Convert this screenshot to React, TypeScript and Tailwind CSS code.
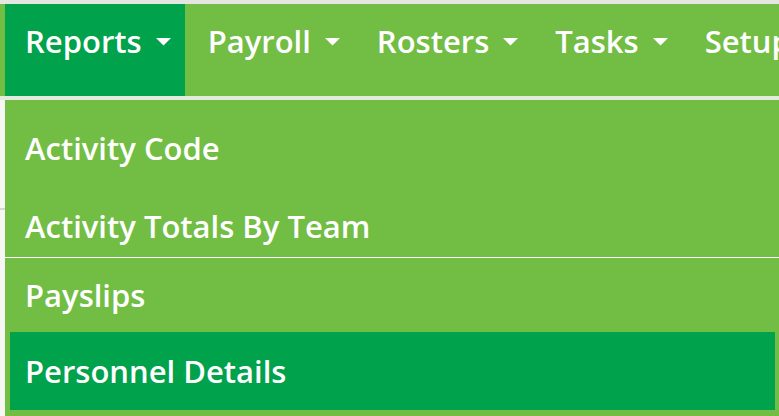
import React from 'react';

const navItems = ['Reports', 'Payroll', 'Rosters', 'Tasks', 'Setup'];

const Caret = () => (
  <svg width="17" height="9" viewBox="0 0 17 9" className="ml-[13px] shrink-0">
    <path d="M1 1 L16 1 L8.5 8.5 Z" fill="#ffffff" />
  </svg>
);

export default function App() {
  return (
    <div
      className="w-[779px] h-[416px] overflow-hidden bg-white text-white"
      style={{ fontFamily: '"Open Sans", "Liberation Sans", sans-serif' }}
    >
      <div className="h-[4px] bg-[#e4e6e2]" />
      {/* top nav */}
      <div className="h-[92px] bg-[#72bd44] flex pl-[5px] whitespace-nowrap">
        {navItems.map((item, i) => (
          <div
            key={item}
            className={`flex items-start h-full pl-[20px] pr-[13px] pt-[17px] ${
              i === 0 ? 'bg-[#00a24b]' : ''
            } ${i > 0 ? 'ml-[3px]' : ''}`}
          >
            <span className="text-[31px] font-semibold leading-[40px]">{item}</span>
            {item !== 'Setup' && (
              <div className="h-[40px] flex items-center">
                <Caret />
              </div>
            )}
          </div>
        ))}
      </div>
      <div className="h-[4px] bg-[#e2ebdc]" />
      {/* dropdown */}
      <div className="flex h-[316px]">
        <div className="w-[5px] bg-[#f6f7f5] flex flex-col">
          <div className="h-[108px]" />
          <div className="h-[2px] bg-[#d4d6d2]" />
        </div>
        <div className="flex-1 bg-[#72bd44] pt-[9px] text-[31px] font-semibold">
          <div className="h-[78px] flex items-center pl-[20px]">Activity Code</div>
          <div className="h-[70px] flex items-center pl-[20px] pt-[8px]">Activity Totals By Team</div>
          <div className="h-px bg-white" />
          <div className="h-[74px] flex items-center pl-[20px]">Payslips</div>
          <div className="pl-[5px] pr-[4px]">
            <div className="h-[78px] flex items-center pl-[15px] bg-[#00a24b]">Personnel Details</div>
          </div>
        </div>
      </div>
    </div>
  );
}
